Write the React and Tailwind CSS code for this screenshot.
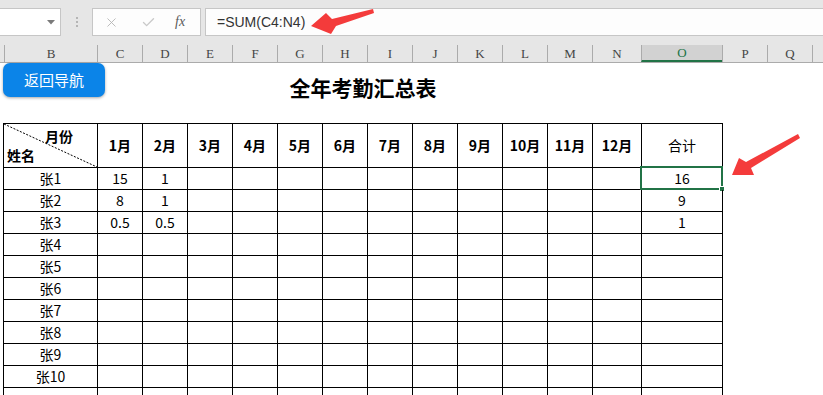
import { X, Check } from "lucide-react";

const letters = [
  { l: "B", w: 93 },
  { l: "C", w: 45 },
  { l: "D", w: 45 },
  { l: "E", w: 45 },
  { l: "F", w: 45 },
  { l: "G", w: 45 },
  { l: "H", w: 45 },
  { l: "I", w: 45 },
  { l: "J", w: 45 },
  { l: "K", w: 45 },
  { l: "L", w: 45 },
  { l: "M", w: 45 },
  { l: "N", w: 49 },
  { l: "O", w: 81, active: true },
  { l: "P", w: 45 },
  { l: "Q", w: 45 },
];

const months = ["1月", "2月", "3月", "4月", "5月", "6月", "7月", "8月", "9月", "10月", "11月", "12月"];

const rows = [
  { name: "张1", vals: ["15", "1"], total: "16" },
  { name: "张2", vals: ["8", "1"], total: "9" },
  { name: "张3", vals: ["0.5", "0.5"], total: "1" },
  { name: "张4" },
  { name: "张5" },
  { name: "张6" },
  { name: "张7" },
  { name: "张8" },
  { name: "张9" },
  { name: "张10" },
  { name: "" },
];

const cell = "border-r border-b border-black flex items-center justify-center";

export default function App() {
  return (
    <div className="relative w-[823px] h-[395px] overflow-hidden bg-white font-['Noto_Sans_CJK_SC',sans-serif] text-black">
      {/* Formula bar */}
      <div className="h-[46px] bg-[#e6e6e6] flex items-start pt-[8px]">
        <div className="w-[61px] h-[28px] bg-white border border-l-0 border-[#c6c6c6] flex items-center justify-end pr-[5px]">
          <svg width="8" height="5" viewBox="0 0 8 5">
            <path d="M0 0 L8 0 L4 4.5 Z" fill="#7a7a7a" />
          </svg>
        </div>
        <div className="w-[31px] h-[28px] flex flex-col items-center justify-center gap-[2px]">
          <span className="w-[2px] h-[2px] bg-[#b5b5b5]" />
          <span className="w-[2px] h-[2px] bg-[#b5b5b5]" />
          <span className="w-[2px] h-[2px] bg-[#b5b5b5]" />
        </div>
        <div className="w-[109px] h-[28px] bg-[#fdfdfd] border border-[#c6c6c6] flex items-center">
          <X className="ml-[11px]" size={15} strokeWidth={1.4} color="#b3b3b3" />
          <Check className="ml-[22px]" size={15} strokeWidth={2.2} color="#c9c9c9" />
          <span className="ml-[19px] font-['Liberation_Serif',serif] italic text-[14px] text-[#5a5a5a] leading-none">fx</span>
        </div>
        <div className="ml-[4px] flex-1 h-[28px] bg-[#fdfdfd] border border-r-0 border-[#c6c6c6] flex items-center pl-[11px]">
          <span className="font-['Liberation_Sans',sans-serif] text-[14px] text-[#333]">=SUM(C4:N4)</span>
        </div>
      </div>

      {/* Column letters */}
      <div className="flex h-[18px] bg-[#e6e6e6] border-b border-[#ababab] -mt-[1px]">
        <div className="w-[4px] shrink-0" />
        {letters.map((c) => (
          <div
            key={c.l}
            style={{ width: c.w }}
            className={
              "shrink-0 border-l border-[#ababab] flex items-center justify-center font-['Liberation_Serif',serif] text-[13px] leading-none " +
              (c.active ? "bg-[#d2d2d2] text-[#217346] border-b-2 border-b-[#217346]" : "text-[#444]")
            }
          >
            {c.l}
          </div>
        ))}
        <div className="flex-1 border-l border-[#ababab]" />
      </div>

      {/* Sheet */}
      <div className="ml-[3px] w-[720px] h-[60px] relative pt-[10px] text-center">
        <button className="absolute left-0 top-0 w-[102px] h-[34px] rounded-[7px] bg-[#0b84e8] text-white text-[15px] shadow-[0_1px_3px_rgba(0,0,0,0.35)]">
          返回导航
        </button>
        <div className="text-[21px] leading-[28px] font-bold">全年考勤汇总表</div>
      </div>

      <div className="ml-[3px] w-fit border-l border-t border-black grid grid-cols-[94px_repeat(11,45px)_49px_81px] text-[14px]">
        {/* header */}
        <div className="relative h-[44px] border-r border-b border-black flex flex-col pt-[3px] leading-[19px] font-bold">
          <svg className="absolute inset-0" width="93" height="43" viewBox="0 0 93 43">
            <line x1="0" y1="0" x2="93" y2="43" stroke="#000" strokeWidth="1" strokeDasharray="2 1.5" />
          </svg>
          <span className="self-end pr-[24px]">月份</span>
          <span className="self-start pl-[3px]">姓名</span>
        </div>
        {months.map((m) => (
          <div key={m} className={cell + " h-[44px] font-bold"}>
            {m}
          </div>
        ))}
        <div className={cell + " h-[44px]"}>合计</div>

        {rows.map((r, i) => (
          <div key={i} className="contents">
            <div className={cell + " h-[22px]"}>{r.name}</div>
            {months.map((m, j) => (
              <div key={m} className={cell + " h-[22px]"}>
                {r.vals ? r.vals[j] : ""}
              </div>
            ))}
            <div className={cell + " h-[22px] relative"}>
              {r.total}
              {i === 0 && (
                <div className="absolute -left-[2px] -top-[2px] w-[83px] h-[24px] border-2 border-[#217346]">
                  <div className="absolute -right-[4px] -bottom-[4px] w-[6px] h-[6px] bg-[#217346] border border-white" />
                </div>
              )}
            </div>
          </div>
        ))}
      </div>

      {/* Red annotation arrows */}
      <svg className="absolute inset-0 pointer-events-none" width="823" height="395" viewBox="0 0 823 395">
        <polygon points="311,26 326,13 332,19 373,9 374,13 336,26 331,34" fill="#f43b3b" />
        <polygon points="732,175 739,158 746,162 798,134 800,138 751,168 754,175" fill="#f43b3b" />
      </svg>
    </div>
  );
}
